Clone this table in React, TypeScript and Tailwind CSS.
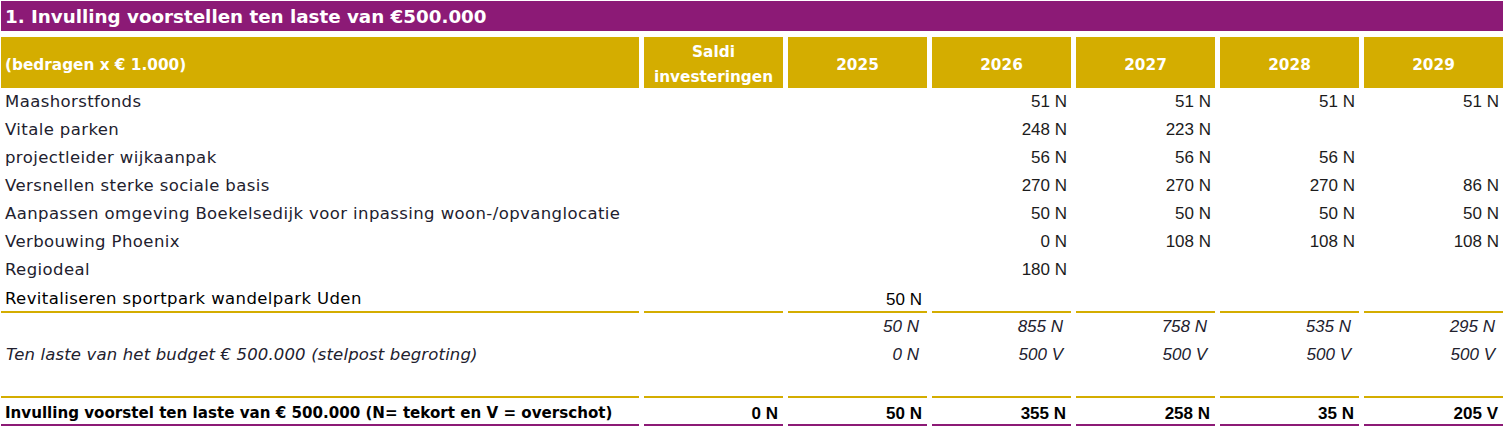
const purple = "bg-[#8c1a76]";

type Row = {
  label: string;
  values: string[];
  kind?: "normal" | "last" | "sum" | "budget" | "blank" | "total";
};

const rows: Row[] = [
  { label: "Maashorstfonds", values: ["", "", "51 N", "51 N", "51 N", "51 N"] },
  { label: "Vitale parken", values: ["", "", "248 N", "223 N", "", ""] },
  { label: "projectleider wijkaanpak", values: ["", "", "56 N", "56 N", "56 N", ""] },
  { label: "Versnellen sterke sociale basis", values: ["", "", "270 N", "270 N", "270 N", "86 N"] },
  {
    label: "Aanpassen omgeving Boekelsedijk voor inpassing woon-/opvanglocatie",
    values: ["", "", "50 N", "50 N", "50 N", "50 N"],
  },
  { label: "Verbouwing Phoenix", values: ["", "", "0 N", "108 N", "108 N", "108 N"] },
  { label: "Regiodeal", values: ["", "", "180 N", "", "", ""] },
  { label: "Revitaliseren sportpark wandelpark Uden", values: ["", "50 N", "", "", "", ""], kind: "last" },
  { label: "", values: ["", "50 N", "855 N", "758 N", "535 N", "295 N"], kind: "sum" },
  {
    label: "Ten laste van het budget € 500.000 (stelpost begroting)",
    values: ["", "0 N", "500 V", "500 V", "500 V", "500 V"],
    kind: "budget",
  },
  { label: "", values: ["", "", "", "", "", ""], kind: "blank" },
  {
    label: "Invulling voorstel ten laste van € 500.000 (N= tekort en V = overschot)",
    values: ["0 N", "50 N", "355 N", "258 N", "35 N", "205 V"],
    kind: "total",
  },
];

const grid = "grid grid-cols-[638px_repeat(6,139px)] gap-x-[5px]";
const label = "font-['DejaVu_Sans',sans-serif]";
const num = "font-['Liberation_Sans',Arial,sans-serif] text-[17px]";
const plain = `${label} text-[16.5px] tracking-[0.4px]`;

function TableRow({ row }: { row: Row }) {
  const kind = row.kind ?? "normal";
  let cell = "h-[28px] flex items-center";
  let lab = `${plain} text-[#22212e] pl-[4px]`;
  let val = `${num} text-[#1c1c1c] justify-end pr-[4px]`;

  if (kind === "last") {
    cell = "h-[29px] flex items-center border-b-2 border-[#d4ad00] pt-[4px]";
    lab = `${plain} text-black pl-[4px]`;
    val = `${num} text-black justify-end pr-[5px]`;
  } else if (kind === "sum" || kind === "budget") {
    lab = `${label} text-[16.5px] tracking-[0.15px] italic text-[#22212e] pl-[5px]`;
    val = `${num} italic text-[#22212e] justify-end pr-[8px]`;
  } else if (kind === "blank") {
    cell = "h-[29px] flex items-center border-b-2 border-[#d4ad00]";
  } else if (kind === "total") {
    cell = "h-[28px] flex items-center border-b-2 border-[#8c1a76] pt-[5px]";
    lab = `${label} text-[15.1px] font-bold text-black pl-[4px]`;
    val = `${num} font-bold text-black justify-end pr-[5px]`;
  }

  return (
    <div className={grid}>
      <div className={`${cell} ${lab} whitespace-nowrap`}>{row.label}</div>
      {row.values.map((v, i) => (
        <div key={i} className={`${cell} ${val}`}>
          {v}
        </div>
      ))}
    </div>
  );
}

export default function App() {
  const years = ["2025", "2026", "2027", "2028", "2029"];
  return (
    <div className="w-[1503px] h-[427px] bg-white overflow-hidden pl-px pt-px">
      <div className={`${purple} h-[30px] flex items-center pl-[4px] pt-px`}>
        <span className={`${label} text-[18.3px] font-bold text-white`}>
          1. Invulling voorstellen ten laste van €500.000
        </span>
      </div>
      <div className={`${grid} mt-[6px]`}>
        <div className={`bg-[#d4ad00] h-[51px] flex items-center pl-[4px] pt-[5px] ${label} text-[15.3px] font-bold text-white`}>
          (bedragen x € 1.000)
        </div>
        <div className={`bg-[#d4ad00] h-[51px] flex items-center justify-center text-center leading-[25px] pt-[5px] ${label} text-[15.3px] font-bold text-white`}>
          Saldi
          <br />
          investeringen
        </div>
        {years.map((y) => (
          <div
            key={y}
            className={`bg-[#d4ad00] h-[51px] flex items-center justify-center pt-[5px] ${label} text-[15.3px] font-bold text-white`}
          >
            {y}
          </div>
        ))}
      </div>
      {rows.map((r, i) => (
        <TableRow key={i} row={r} />
      ))}
    </div>
  );
}
